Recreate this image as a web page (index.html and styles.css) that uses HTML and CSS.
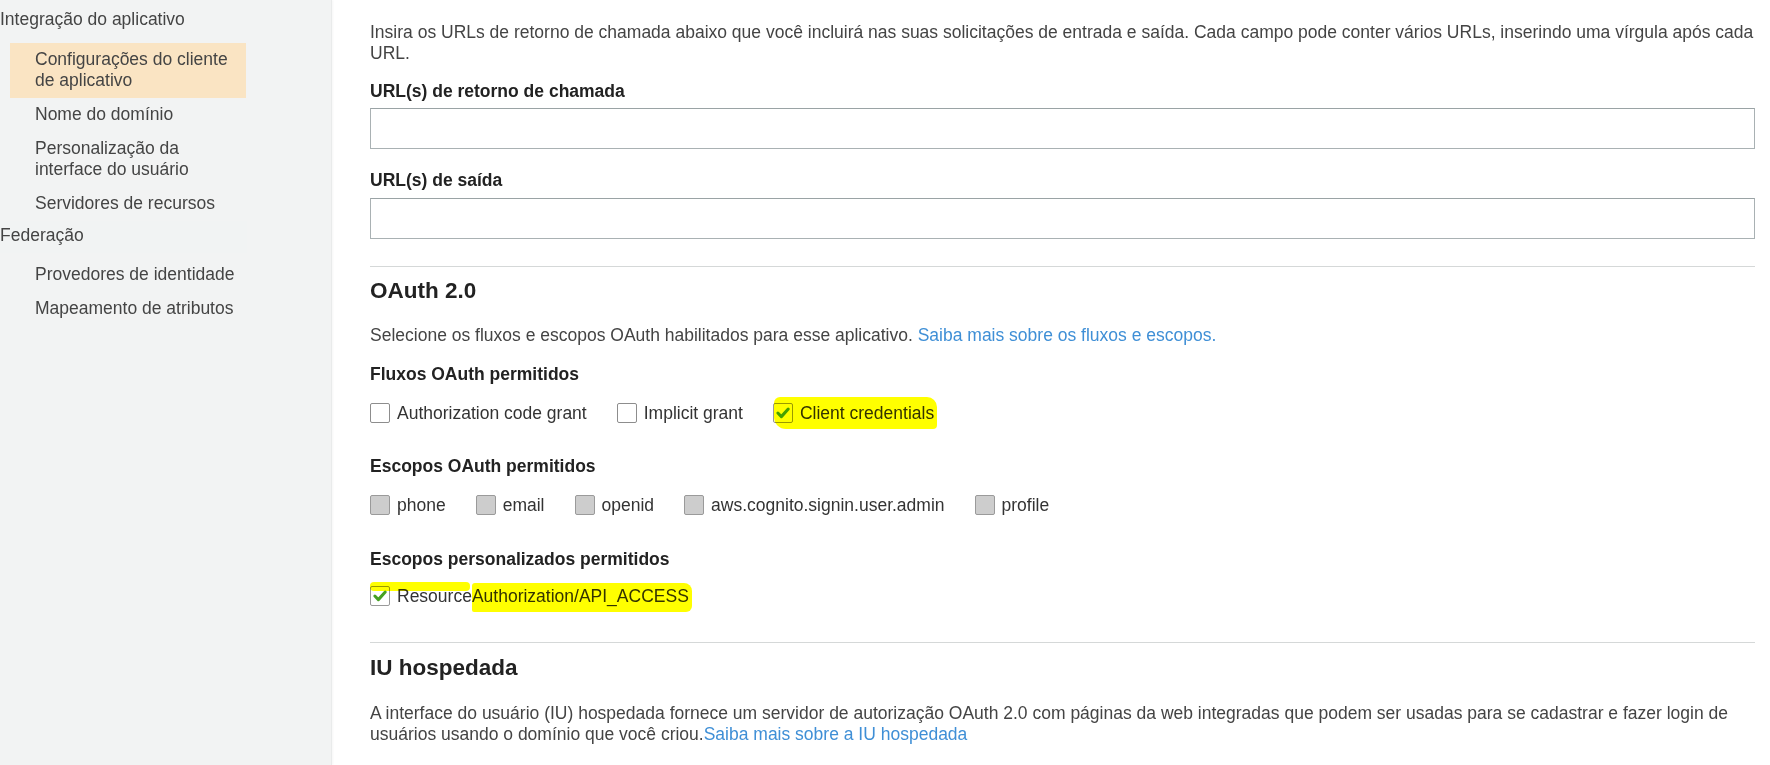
FILE: index.html
```html
<!DOCTYPE html>
<html lang="pt-BR">
<head>
<meta charset="utf-8">
<title>Configurações do cliente de aplicativo</title>
<link rel="stylesheet" href="styles.css">
</head>
<body>
<div class="page">
  <nav class="sidebar">
    <div class="group-title">Integração do aplicativo</div>
    <ul class="sublist">
      <li class="item active">Configurações do cliente<br>de aplicativo</li>
      <li class="item">Nome do domínio</li>
      <li class="item">Personalização da<br>interface do usuário</li>
      <li class="item">Servidores de recursos</li>
    </ul>
    <div class="group-title fed">Federação</div>
    <ul class="sublist sub2">
      <li class="item">Provedores de identidade</li>
      <li class="item">Mapeamento de atributos</li>
    </ul>
  </nav>
  <main class="main">
    <p class="para intro">Insira os URLs de retorno de chamada abaixo que você incluirá nas suas solicitações de entrada e saída. Cada campo pode conter vários URLs, inserindo uma vírgula após cada URL.</p>
    <div class="label l1">URL(s) de retorno de chamada</div>
    <div class="input"></div>
    <div class="label l2">URL(s) de saída</div>
    <div class="input"></div>
    <hr class="rule r1">
    <h2 class="heading">OAuth 2.0</h2>
    <p class="para p2">Selecione os fluxos e escopos OAuth habilitados para esse aplicativo. <a class="link">Saiba mais sobre os fluxos e escopos.</a></p>
    <div class="label l3">Fluxos OAuth permitidos</div>
    <div class="checks c1">
      <label class="check"><span class="box"></span><span>Authorization code grant</span></label>
      <label class="check"><span class="box"></span><span>Implicit grant</span></label>
      <label class="check hl"><span class="box on"><svg viewBox="0 0 20 20" width="20" height="20"><path d="M4.3 10 L8.2 14 L15.8 5.6" fill="none" stroke="#46a022" stroke-width="3.4" stroke-linecap="round" stroke-linejoin="round"/></svg></span><span>Client credentials</span></label>
    </div>
    <div class="label l4">Escopos OAuth permitidos</div>
    <div class="checks c2">
      <label class="check"><span class="box dis"></span><span>phone</span></label>
      <label class="check"><span class="box dis"></span><span>email</span></label>
      <label class="check"><span class="box dis"></span><span>openid</span></label>
      <label class="check"><span class="box dis"></span><span>aws.cognito.signin.user.admin</span></label>
      <label class="check"><span class="box dis"></span><span>profile</span></label>
    </div>
    <div class="label l5">Escopos personalizados permitidos</div>
    <div class="checks c3">
      <label class="check hl-thin"><span class="box on"><svg viewBox="0 0 20 20" width="20" height="20"><path d="M4.3 10 L8.2 14 L15.8 5.6" fill="none" stroke="#46a022" stroke-width="3.4" stroke-linecap="round" stroke-linejoin="round"/></svg></span><span>Resource<span class="hl2">Authorization/API_ACCESS</span></span></label>
    </div>
    <hr class="rule r2">
    <h2 class="heading h2b">IU hospedada</h2>
    <p class="para p3">A interface do usuário (IU) hospedada fornece um servidor de autorização OAuth 2.0 com páginas da web integradas que podem ser usadas para se cadastrar e fazer login de usuários usando o domínio que você criou.<a class="link">Saiba mais sobre a IU hospedada</a></p>
  </main>
</div>
</body>
</html>
```

FILE: styles.css
```css
html, body {
  margin: 0;
  padding: 0;
  background: #ffffff;
}
body {
  font-family: "Liberation Sans", Arial, sans-serif;
  font-size: 17.5px;
  line-height: 21px;
  color: #333;
  overflow: hidden;
}
.page {
  display: flex;
  height: 765px;
}
.sidebar {
  width: 331px;
  flex: 0 0 331px;
  background: #f2f3f3;
  border-right: 1px solid #e9ebeb;
  box-shadow: 1px 0 2px rgba(0,0,0,0.04);
  color: #444;
}
.group-title {
  padding: 9px 0 7px 0;
  width: 247px;
}
.group-title.fed {
  padding: 4px 0 7px 0;
  background: #f1f3f3;
}
.sublist {
  list-style: none;
  margin: 6px 0 0 0;
  padding: 0;
}
.sublist.sub2 {
  margin-top: 5px;
}
.item {
  margin-left: 10px;
  width: 211px;
  padding: 6px 0 7px 25px;
}
.item.active {
  background: #fae4c3;
}
.main {
  flex: 1;
  padding: 22px 15px 0 38px;
  min-width: 0;
}
.para {
  margin: 0;
  color: #444;
}
.label {
  font-weight: bold;
  color: #222;
}
.l1 { margin-top: 17px; }
.input {
  margin-top: 6px;
  height: 41px;
  box-sizing: border-box;
  border: 1px solid #a9b1b3;
  border-top-color: #9aa3a5;
  background: #fff;
}
.l2 { margin-top: 21px; }
.l2 + .input { margin-top: 7px; }
.rule {
  border: 0;
  border-top: 1px solid #d5d8d8;
  margin: 0;
}
.r1 { margin-top: 27px; }
.heading {
  margin: 11px 0 0 0;
  font-size: 22.5px;
  line-height: 26px;
  font-weight: bold;
  color: #222;
}
.p2 { margin-top: 21px; }
.link {
  color: #3f8fd6;
  text-decoration: none;
}
.l3 { margin-top: 18px; }
.checks {
  display: flex;
  gap: 30px;
  margin-top: 17px;
  height: 22px;
  align-items: center;
}
.check {
  display: flex;
  align-items: center;
  gap: 7px;
  color: #333;
  position: relative;
}
.check > span {
  position: relative;
  z-index: 1;
}
.box {
  width: 20px;
  height: 20px;
  box-sizing: border-box;
  border: 1px solid #8d8d8d;
  border-radius: 2px;
  background: #fff;
  display: flex;
  align-items: center;
  justify-content: center;
  flex: 0 0 20px;
}
.box svg {
  display: block;
}
.box.dis {
  background: #cdcdcd;
  border-color: #9a9a9a;
}
.box.on {
  border-color: #9a9a9a;
}
.hl::before {
  content: "";
  position: absolute;
  left: 1px;
  right: -3px;
  top: -6px;
  bottom: -5px;
  background: #ffff00;
  border-radius: 6px 10px 4px 12px;
  mix-blend-mode: multiply;
  z-index: 2;
}
.hl-thin::before {
  content: "";
  position: absolute;
  left: 0;
  width: 100px;
  top: -4px;
  height: 9px;
  background: #ffff00;
  border-radius: 4px;
  mix-blend-mode: multiply;
  z-index: 2;
}
.hl2 {
  position: relative;
}
.hl2::before {
  content: "";
  position: absolute;
  left: 0;
  right: -3px;
  top: -3px;
  bottom: -6px;
  background: #ffff00;
  border-radius: 3px 8px 6px 2px;
  mix-blend-mode: multiply;
  z-index: 2;
}
.l4 { margin-top: 32px; }
.l5 { margin-top: 33px; }
.c3 { margin-top: 15px; }
.r2 { margin-top: 35px; }
.h2b { margin-top: 12px; }
.p3 { margin-top: 22px; }
```
